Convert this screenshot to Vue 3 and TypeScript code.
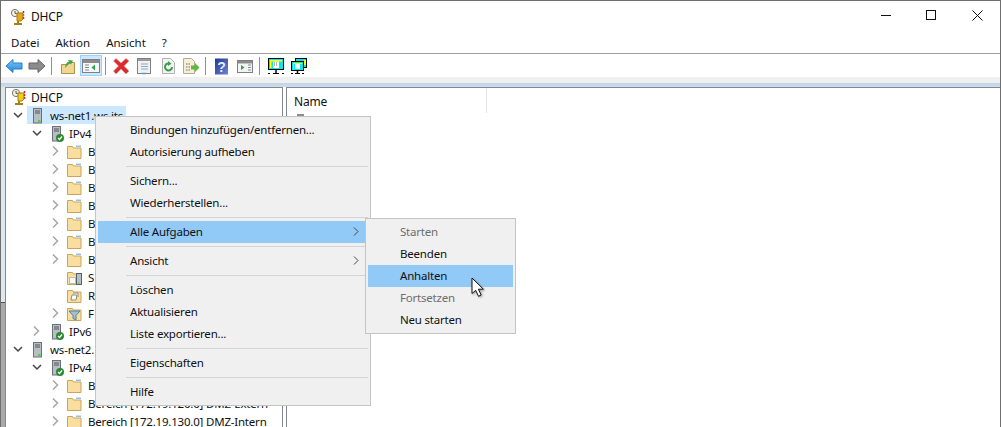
<script setup lang="ts">
interface TreeRow {
  label: string
  depth: number
  arrow: 'open' | 'closed' | 'none'
  icon: 'server' | 'ipv' | 'folder' | 'serverfolder' | 'reserve' | 'filter'
  selected?: boolean
}

interface MenuItem {
  label?: string
  sub?: boolean
  active?: boolean
  disabled?: boolean
}

const rows: TreeRow[] = [
  { label: 'ws-net1.ws.its', depth: 0, arrow: 'open', icon: 'server', selected: true },
  { label: 'IPv4', depth: 1, arrow: 'open', icon: 'ipv' },
  { label: 'B', depth: 2, arrow: 'closed', icon: 'folder' },
  { label: 'B', depth: 2, arrow: 'closed', icon: 'folder' },
  { label: 'B', depth: 2, arrow: 'closed', icon: 'folder' },
  { label: 'B', depth: 2, arrow: 'closed', icon: 'folder' },
  { label: 'B', depth: 2, arrow: 'closed', icon: 'folder' },
  { label: 'B', depth: 2, arrow: 'closed', icon: 'folder' },
  { label: 'B', depth: 2, arrow: 'closed', icon: 'folder' },
  { label: 'S', depth: 2, arrow: 'none', icon: 'serverfolder' },
  { label: 'R', depth: 2, arrow: 'none', icon: 'reserve' },
  { label: 'F', depth: 2, arrow: 'closed', icon: 'filter' },
  { label: 'IPv6', depth: 1, arrow: 'closed', icon: 'ipv' },
  { label: 'ws-net2.', depth: 0, arrow: 'open', icon: 'server' },
  { label: 'IPv4', depth: 1, arrow: 'open', icon: 'ipv' },
  { label: 'B', depth: 2, arrow: 'closed', icon: 'folder' },
  { label: 'Bereich [172.19.120.0] DMZ-Extern', depth: 2, arrow: 'closed', icon: 'folder' },
  { label: 'Bereich [172.19.130.0] DMZ-Intern', depth: 2, arrow: 'closed', icon: 'folder' },
]

const mainMenu: MenuItem[] = [
  { label: 'Bindungen hinzufügen/entfernen...' },
  { label: 'Autorisierung aufheben' },
  {},
  { label: 'Sichern...' },
  { label: 'Wiederherstellen...' },
  {},
  { label: 'Alle Aufgaben', sub: true, active: true },
  {},
  { label: 'Ansicht', sub: true },
  {},
  { label: 'Löschen' },
  { label: 'Aktualisieren' },
  { label: 'Liste exportieren...' },
  {},
  { label: 'Eigenschaften' },
  {},
  { label: 'Hilfe' },
]

const subMenu: MenuItem[] = [
  { label: 'Starten', disabled: true },
  { label: 'Beenden' },
  { label: 'Anhalten', active: true },
  { label: 'Fortsetzen', disabled: true },
  { label: 'Neu starten' },
]
</script>

<template>
  <div class="window">
    <header class="titlebar">
      <svg class="title-icon" width="18" height="18" viewBox="0 0 18 18">
        <circle cx="6" cy="5" r="3.6" fill="#f4f1e6" stroke="#77756c" />
        <path d="M6 3v2.400h2" fill="none" stroke="#555" />
        <path d="M8 5h6v6l-2 2H8z" fill="#e8a81c" stroke="#a97e10" />
        <path d="M14.500 3v2" stroke="#d23" stroke-width="1.500" />
        <path d="M14.500 6v2" stroke="#2a9fb0" stroke-width="1.500" />
        <path d="M14.500 9v2" stroke="#d23" stroke-width="1.500" />
        <path d="M9 13v2M5 16h8" stroke="#a97e10" stroke-width="2" />
      </svg>
      <span class="title-text">DHCP</span>
      <div class="window-btns">
        <svg width="11" height="11" viewBox="0 0 11 11"><path d="M1 5.500h10" stroke="#111" /></svg>
        <svg width="11" height="11" viewBox="0 0 11 11"><rect x=".5" y=".5" width="9" height="9" fill="none" stroke="#111" /></svg>
        <svg width="11" height="11" viewBox="0 0 11 11"><path d="M.5.5l10 10M10.500.5l-10 10" stroke="#111" /></svg>
      </div>
    </header>

    <nav class="menubar">
      <span>Datei</span><span>Aktion</span><span>Ansicht</span><span>?</span>
    </nav>

    <div class="toolbar">
      <svg width="18" height="18" viewBox="0 0 18 18">
        <defs>
          <linearGradient id="blueArrow" x1="0" y1="0" x2="0" y2="1">
            <stop offset="0" stop-color="#7cc8f8" />
            <stop offset="1" stop-color="#1f86de" />
          </linearGradient>
          <linearGradient id="helpBlue" x1="0" y1="0" x2="1" y2="1">
            <stop offset="0" stop-color="#24398f" />
            <stop offset="1" stop-color="#6a83d8" />
          </linearGradient>
        </defs>
        <path d="M1 9l7-6.500V6h9v6H8v3.500z" fill="url(#blueArrow)" stroke="#2a7fc4" />
      </svg>
      <svg width="18" height="18" viewBox="0 0 18 18"><path d="M17 9l-7-6.500V6H1v6h9v3.500z" fill="#8c8c8c" stroke="#626262" /></svg>
      <i class="tb-sep" />
      <svg class="g2" width="18" height="18" viewBox="0 0 18 18">
        <path d="M2.500 7.500h5l1-2h7v11h-13z" fill="#f0d690" stroke="#b39248" />
        <path d="M6 11c0-3 1.500-5 4-6L9 3l5 .5-2 4-1-1c-2 1-3 2-5 4.500z" fill="#3fa648" />
      </svg>
      <span class="tb-pressed gm2">
        <svg width="18" height="16" viewBox="0 0 18 16">
          <rect x=".5" y="1.500" width="17" height="13" fill="#f6f6f6" stroke="#7f7f7f" />
          <path d="M1 2h16v3H1z" fill="#8c8c8c" />
          <path d="M3 7h4M3 9.500h4M3 12h4" stroke="#7a8a9a" stroke-width="1.200" />
          <path d="M13 6.500v6L9.500 9.500z" fill="#2fa64a" />
        </svg>
      </span>
      <i class="tb-sep gm2" />
      <svg class="g1" width="18" height="18" viewBox="0 0 18 18"><path d="M1.500 4L4 1.500l5 4.500 5-4.500L17 4l-5 5 5 5-3 3-5-5-5 5-2.500-3 5-5z" fill="#e02a2a" stroke="#c9a0a0" stroke-width=".6" /></svg>
      <svg width="18" height="18" viewBox="0 0 18 18">
        <rect x="2.500" y="1.500" width="13" height="15" fill="#f1f1f1" stroke="#808080" />
        <path d="M3 2h12v2H3z" fill="#9a9a9a" />
        <path d="M6 7h7M6 9.500h7M6 12h7" stroke="#8fa8c4" />
        <path d="M7 16.500h4" stroke="#3fa4ee" stroke-width="1.500" />
      </svg>
      <svg class="g2" width="18" height="18" viewBox="0 0 18 18">
        <path d="M2.500 1.500h8l4 4v11h-12z" fill="#f3f3f3" stroke="#b0b0b0" />
        <path d="M12 10a3.500 3.500 0 1 1-2-3.200" fill="none" stroke="#3aa04a" stroke-width="2" />
        <path d="M8 4l3.500 2.800L8 9z" fill="#3aa04a" />
      </svg>
      <svg class="gm1" width="18" height="18" viewBox="0 0 18 18">
        <path d="M1.500 1.500h8l3 3v12h-11z" fill="#f6efd6" stroke="#b0ac98" />
        <path d="M4 7h4M4 10h4M4 13h4" stroke="#6f6f6f" stroke-dasharray="1.500 1" />
        <path d="M9 8.500h4V6l4.500 4.500L13 15v-2.500H9z" fill="#62b83e" />
      </svg>
      <i class="tb-sep" />
      <svg class="g1" width="18" height="18" viewBox="0 0 18 18">
        <rect x="3" y="1.500" width="13" height="16" fill="url(#helpBlue)" />
        <text x="9.500" y="14.500" font-family="Liberation Sans, sans-serif" font-size="14" font-weight="700" fill="#e6ecff" text-anchor="middle">?</text>
      </svg>
      <svg class="g1" width="18" height="18" viewBox="0 0 18 18">
        <rect x="1.500" y="3.500" width="15" height="12" fill="#f4f4f4" stroke="#7f7f7f" />
        <path d="M2 4h14v2.500H2z" fill="#8c8c8c" />
        <path d="M12 8h3M12 10.500h3M12 13h3" stroke="#7a8a9a" stroke-width="1.200" />
        <path d="M5 8v5l3.500-2.500z" fill="#2fa64a" />
      </svg>
      <i class="tb-sep" />
      <svg class="g2" width="18" height="18" viewBox="0 0 18 18">
        <rect x="1.500" y="1.500" width="15" height="11" fill="#00e8f0" stroke="#000" />
        <path d="M3 3h12v1.500H3zM3 3h1.500v8H3z" fill="#ffff00" />
        <rect x="6" y="4.500" width="6" height="6.500" fill="#fff" />
        <path d="M7 6h4M7 8h4" stroke="#666" stroke-dasharray="1 1" />
        <path d="M9 13v3" stroke="#000" stroke-width="1.500" />
        <path d="M1 16.500h2M6 16.500h6M15 16.500h2" stroke="#000" />
      </svg>
      <svg width="18" height="18" viewBox="0 0 18 18">
        <rect x="5.500" y="1.500" width="11" height="9" fill="#00e8f0" stroke="#000" />
        <rect x="1.500" y="4.500" width="12" height="9" fill="#00e8f0" stroke="#000" />
        <path d="M3 6h9v1H3zM3 6h1v6H3z" fill="#ffff00" />
        <rect x="5" y="7" width="5" height="5" fill="#fff" />
        <path d="M14 3h2v5h-2z" fill="#ffff00" />
        <path d="M7.500 14v2" stroke="#000" stroke-width="1.500" />
        <path d="M1 16.500h2M5 16.500h5M12 16.500h2" stroke="#000" />
      </svg>
    </div>

    <div class="band" />

    <main class="panes">
      <div class="strip" />
      <section class="tree">
        <div class="root-row">
          <svg width="18" height="18" viewBox="0 0 18 18">
            <circle cx="6" cy="5" r="3.600" fill="#f4f1e6" stroke="#77756c" />
            <path d="M6 3v2.400h2" fill="none" stroke="#555" />
            <path d="M8 5h6v6l-2 2H8z" fill="#e8d31c" stroke="#a97e10" />
            <path d="M14.500 3v2M14.500 6v2M14.500 9v2" stroke="#d23" stroke-width="1.500" />
            <path d="M9 13v2M5 16h8" stroke="#a97e10" stroke-width="2" />
          </svg>
          <span>DHCP</span>
        </div>
        <div
          v-for="(row, i) in rows"
          :key="i"
          class="row"
          :class="`depth-${row.depth}`"
        >
          <svg v-if="row.arrow === 'open'" class="arrow" width="10" height="10" viewBox="0 0 10 10"><path d="M1 3l4 4 4-4" fill="none" stroke="#444" stroke-width="1.500" /></svg>
          <svg v-else-if="row.arrow === 'closed'" class="arrow" width="10" height="10" viewBox="0 0 10 10"><path d="M2 .5L6.500 5 2 9.500" fill="none" stroke="#a6a6a6" stroke-width="1.500" /></svg>
          <span v-else class="arrow" />

          <span class="node-wrap" :class="{ selected: row.selected }">
            <svg v-if="row.icon === 'server' || row.icon === 'ipv'" class="node" width="18" height="18" viewBox="0 0 18 18">
              <rect x="6.500" y="2.500" width="8" height="14.500" fill="#b9bec4" stroke="#6a717b" />
              <path d="M8 5h5M8 7h5" stroke="#4e555e" />
              <path v-if="row.icon === 'server'" d="M11 15h2.500" stroke="#4ed14a" stroke-width="2" />
              <template v-if="row.icon === 'ipv'">
                <circle cx="14" cy="14" r="4" fill="#2a8a34" />
                <path d="M12 14l1.500 1.500 2.500-3" fill="none" stroke="#fff" stroke-width="1.200" />
              </template>
            </svg>
            <svg v-else class="node" width="18" height="18" viewBox="0 0 18 18">
              <path d="M2.500 4.500h5l1 1.500h7.500v10.500h-13.500z" fill="#f8dfa0" stroke="#c9a45a" />
              <path v-if="row.icon === 'folder'" d="M11 3.500h5V5h-5z" fill="#8cc4ea" />
              <template v-if="row.icon === 'serverfolder'">
                <rect x="4.500" y="9.500" width="6" height="6" fill="#fff" stroke="#888" stroke-dasharray="1 1" />
                <rect x="11.500" y="5.500" width="5" height="11" fill="#b9bec4" stroke="#59606a" />
                <path d="M13 15h2" stroke="#4ed14a" />
              </template>
              <path v-if="row.icon === 'reserve'" d="M6 14l1-5h5l-1 5zM8 7h5v4" fill="#fff" stroke="#8d8d7d" />
              <path v-if="row.icon === 'filter'" d="M4 7h11l-4 4.500V16l-3-1.500v-3z" fill="#9cc3da" stroke="#5f7f93" />
            </svg>
            <span class="label">{{ row.label }}</span>
          </span>
        </div>
      </section>
      <section class="list">
        <div class="list-head"><span>Name</span></div>
        <div class="list-row"><i class="list-icon" /></div>
      </section>
    </main>

    <ul class="ctx main-ctx">
      <template v-for="(item, i) in mainMenu" :key="i">
        <li v-if="!item.label" class="sep" />
        <li v-else class="item" :class="{ active: item.active }">
          {{ item.label }}
          <svg v-if="item.sub" class="chev" width="6" height="9" viewBox="0 0 6 9"><path d="M1 .5l4 4-4 4" fill="none" stroke="#444" /></svg>
        </li>
      </template>
    </ul>

    <ul class="ctx sub-ctx">
      <li v-for="item in subMenu" :key="item.label" class="item" :class="{ active: item.active, disabled: item.disabled }">{{ item.label }}</li>
    </ul>

    <svg class="cursor" width="16" height="22" viewBox="0 0 16 22">
      <path d="M1 1v15.500l3.700-3.200 2.800 6 2.700-1.300-2.800-5.800h5z" fill="#fff" stroke="#111" />
    </svg>
  </div>
</template>

<style>
html,
body {
  margin: 0;
  background: #fff;
  overflow: hidden;
}
</style>

<style scoped>
.window {
  position: relative;
  width: 1001px;
  height: 427px;
  overflow: hidden;
  box-sizing: border-box;
  border: 1px solid #6f6f6f;
  border-bottom: 0;
  background: #fff;
  font-family: "Noto Sans", "Open Sans", sans-serif;
  font-size: 11.5px;
  letter-spacing: -0.2px;
  color: #111;
}

.titlebar {
  display: flex;
  align-items: center;
  height: 31px;
  padding-left: 8px;
}

.title-text {
  margin-left: 4px;
  font-size: 12px;
}

.window-btns {
  display: flex;
  gap: 35px;
  margin-left: auto;
  padding: 0 17px 2px 0;
}

.menubar {
  display: flex;
  align-items: center;
  gap: 16px;
  height: 21px;
  padding-left: 10px;
  border-bottom: 1px solid #a0a0a0;
  letter-spacing: 0;
}

.toolbar {
  display: flex;
  align-items: center;
  gap: 5px;
  height: 23px;
  padding-left: 4px;
  background: #fff;
}

.toolbar > * {
  flex: none;
}

.g1 {
  margin-left: 1px;
}

.g2 {
  margin-left: 2px;
}

.gm1 {
  margin-left: -1px;
}

.gm2 {
  margin-left: -2px;
}

.tb-sep {
  width: 1px;
  height: 18px;
  background: #8f8f8f;
}

.tb-pressed {
  display: flex;
  align-items: center;
  justify-content: center;
  width: 22px;
  height: 21px;
  box-sizing: border-box;
  background: #cce8ff;
  border: 1px solid #99d1ff;
}

.band {
  height: 10px;
  background: linear-gradient(#f0f0f0 0 6px, #bfd4e7 6px, #cfdeec 10px);
}

.panes {
  display: flex;
}

.strip {
  flex: none;
  width: 4px;
  height: 340px;
  background: linear-gradient(#dfe7ef 0 215px, #555 215px 216px, #a9a9a9 216px);
}

.tree {
  flex: none;
  width: 278px;
  height: 340px;
  margin-right: 3px;
  box-sizing: border-box;
  border: 1px solid #828790;
  border-bottom: 0;
  overflow: hidden;
}

.root-row,
.row {
  display: flex;
  align-items: center;
  height: 18px;
  white-space: nowrap;
}

.root-row {
  gap: 3px;
  padding-left: 4px;
  font-size: 12px;
}

.arrow {
  flex: none;
  width: 10px;
  margin-right: 4px;
}

.depth-0 {
  padding-left: 7px;
}

.depth-1 {
  padding-left: 26px;
}

.depth-2 {
  padding-left: 45px;
}

.node-wrap {
  display: flex;
  align-items: center;
  height: 18px;
}

.node-wrap.selected {
  background: #cce8ff;
}

.node {
  flex: none;
}

.label {
  padding: 2px 3px 0 5px;
  line-height: 16px;
}

.list {
  flex: 1;
  height: 340px;
  border: 1px solid #828790;
  border-bottom: 0;
  border-right: 0;
}

.list-head {
  width: 200px;
  height: 25px;
  padding: 5px 0 0 7px;
  box-sizing: border-box;
  border-right: 1px solid #e5e5e5;
  font-size: 12px;
}

.list-row {
  padding: 1px 0 0 10px;
}

.list-icon {
  display: block;
  width: 7px;
  height: 6px;
  background: #8a8f96;
}

.ctx {
  position: absolute;
  margin: 0;
  padding: 2px;
  list-style: none;
  background: #f0f0f0;
  border: 1px solid #c4c4c4;
}

.main-ctx {
  left: 94px;
  top: 115px;
  width: 270px;
}

.sub-ctx {
  left: 364px;
  top: 217px;
  width: 145px;
}

.item {
  position: relative;
  height: 22px;
  line-height: 22px;
  padding-left: 32px;
}

.item.active {
  background: #91c9f7;
}

.item.disabled {
  color: #6d6d6d;
}

.sep {
  height: 1px;
  margin: 3px 0 3px 28px;
  background: #d4d4d4;
}

.chev {
  position: absolute;
  right: 9px;
  top: 6px;
}

.cursor {
  position: absolute;
  left: 470px;
  top: 276px;
  filter: drop-shadow(1px 1px 1px rgba(0, 0, 0, 0.35));
}
</style>
